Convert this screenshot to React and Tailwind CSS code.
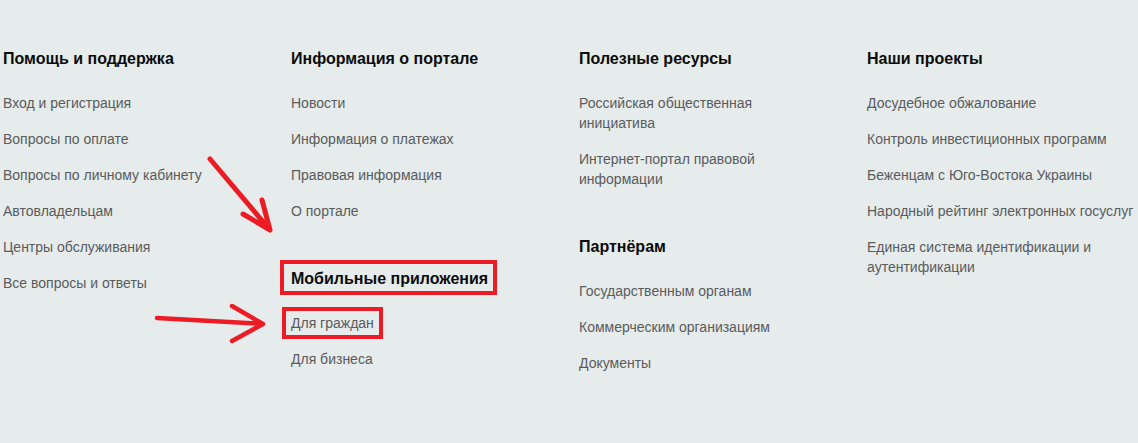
import React from "react";

const columns = [
  {
    sections: [
      {
        title: "Помощь и поддержка",
        links: [
          "Вход и регистрация",
          "Вопросы по оплате",
          "Вопросы по личному кабинету",
          "Автовладельцам",
          "Центры обслуживания",
          "Все вопросы и ответы",
        ],
      },
    ],
  },
  {
    sections: [
      {
        title: "Информация о портале",
        links: ["Новости", "Информация о платежах", "Правовая информация", "О портале"],
      },
      {
        title: "Мобильные приложения",
        marked: true,
        links: ["Для граждан", "Для бизнеса"],
        markedLink: 0,
      },
    ],
  },
  {
    narrow: true,
    sections: [
      {
        title: "Полезные ресурсы",
        links: ["Российская общественная инициатива", "Интернет-портал правовой информации"],
      },
      {
        title: "Партнёрам",
        links: ["Государственным органам", "Коммерческим организациям", "Документы"],
      },
    ],
  },
  {
    sections: [
      {
        title: "Наши проекты",
        links: [
          "Досудебное обжалование",
          "Контроль инвестиционных программ",
          "Беженцам с Юго-Востока Украины",
          "Народный рейтинг электронных госуслуг",
          "Единая система идентификации и аутентификации",
        ],
      },
    ],
  },
];

const Section = ({ section, narrow }) => (
  <div>
    <h3 className="relative w-fit text-[16px] leading-[20px] font-bold text-[#0b0b0b] mb-[24px]">
      {section.title}
      {section.marked && (
        <span className="absolute -left-[11px] -right-[9px] -top-[9px] -bottom-[6px] border-[4px] border-[#ed1c24]" />
      )}
    </h3>
    <ul className={`flex flex-col gap-[16px] ${narrow ? "max-w-[240px]" : "max-w-[275px]"}`}>
      {section.links.map((l, i) => (
        <li key={l} className="relative w-fit text-[14px] leading-[20px] text-[#595b5e]">
          {l}
          {section.markedLink === i && (
            <span className="absolute -left-[9px] -right-[9px] -top-[6px] -bottom-[6px] border-[4px] border-[#ed1c24]" />
          )}
        </li>
      ))}
    </ul>
  </div>
);

export default function App() {
  return (
    <div
      className="relative w-[1138px] h-[443px] bg-[#e6ebeb] overflow-hidden"
      style={{ fontFamily: '"Liberation Sans", Arial, sans-serif' }}
    >
      <div className="flex pl-[3px] pt-[49px]">
        {columns.map((col, i) => (
          <div key={i} className="w-[288px] shrink-0 flex flex-col gap-[48px]">
            {col.sections.map((s) => (
              <Section key={s.title} section={s} narrow={col.narrow} />
            ))}
          </div>
        ))}
      </div>

      {/* hand drawn arrows */}
      <svg
        className="absolute inset-0 pointer-events-none"
        width="1138"
        height="443"
        viewBox="0 0 1138 443"
        fill="none"
        stroke="#ed1c24"
        strokeLinecap="round"
        strokeLinejoin="round"
      >
        <path d="M210 159 L270 230 M262 200 L270 230 L243 214" strokeWidth="5" />
        <path d="M157 318 L263 324 M232 306 L263 324 L232 341" strokeWidth="4.5" />
      </svg>
    </div>
  );
}
